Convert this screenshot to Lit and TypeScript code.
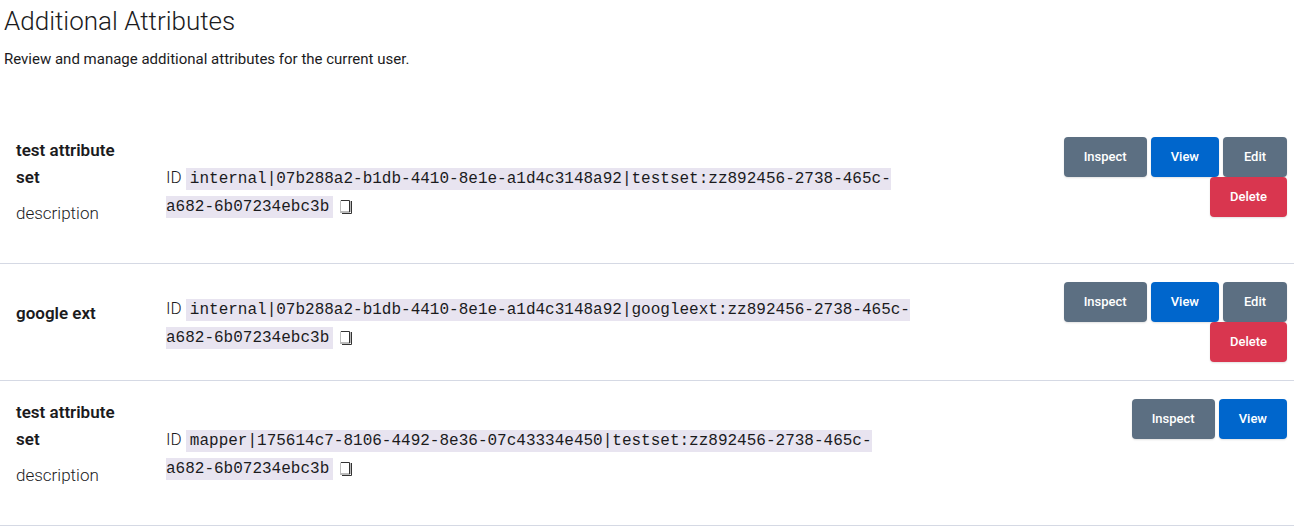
import { LitElement, html, css, nothing } from "lit";
import { customElement, property } from "lit/decorators.js";

type Action = "Inspect" | "View" | "Edit" | "Delete";

interface AttributeSet {
  name: string;
  description?: string;
  id: string;
  actions: Action[];
}

const SETS: AttributeSet[] = [
  {
    name: "test attribute set",
    description: "description",
    id: "internal|07b288a2-b1db-4410-8e1e-a1d4c3148a92|testset:zz892456-2738-465c-a682-6b07234ebc3b",
    actions: ["Inspect", "View", "Edit", "Delete"],
  },
  {
    name: "google ext",
    id: "internal|07b288a2-b1db-4410-8e1e-a1d4c3148a92|googleext:zz892456-2738-465c-a682-6b07234ebc3b",
    actions: ["Inspect", "View", "Edit", "Delete"],
  },
  {
    name: "test attribute set",
    description: "description",
    id: "mapper|175614c7-8106-4492-8e36-07c43334e450|testset:zz892456-2738-465c-a682-6b07234ebc3b",
    actions: ["Inspect", "View"],
  },
];

@customElement("copy-button")
export class CopyButton extends LitElement {
  @property() value = "";

  static styles = css`
    :host {
      display: inline-block;
      margin-left: 7px;
      vertical-align: -3px;
      line-height: 0;
    }
    .copy {
      padding: 0;
      border: 0;
      background: none;
      cursor: pointer;
    }
    .icon {
      display: block;
    }
  `;

  private copy() {
    navigator.clipboard?.writeText(this.value);
  }

  render() {
    return html`<button class="copy" type="button" aria-label="Copy ID" @click=${this.copy}>
      <svg class="icon" width="12" height="14" viewBox="0 0 12 14" fill="none">
        <path d="M0.5 0.5v11.5M10.5 1v11" stroke="#bbb" />
        <path d="M0 12h10" stroke="#bbb" stroke-width="2" />
        <path d="M1 0.5h8.5v11.5M11.5 1v12.5H2" stroke="#333" />
      </svg>
    </button>`;
  }
}

@customElement("app-root")
export class AppRoot extends LitElement {
  static styles = css`
    :host {
      display: block;
      background: #fff;
      color: #1b1b1d;
      font-family: Roboto, "Noto Sans", sans-serif;
      font-size: 17px;
      font-weight: 300;
      line-height: 28px;
    }
    .header {
      padding: 3px 4px 0;
    }
    .title {
      margin: 0;
      font-size: 26px;
      font-weight: 300;
      line-height: 36px;
    }
    .intro {
      margin: 8px 0 0;
      font-size: 15px;
      font-weight: 400;
      line-height: 24px;
    }
    .sets {
      width: 100%;
      margin-top: 48px;
      border-collapse: collapse;
      table-layout: fixed;
    }
    .cell {
      padding: 18px 16px;
      border-bottom: 1px solid #d5d9e4;
      text-align: left;
      vertical-align: middle;
      font-weight: 300;
    }
    .name {
      box-sizing: border-box;
      width: 150px;
    }
    .actions {
      box-sizing: border-box;
      width: 28%;
      padding-right: 7px;
      padding-left: 64px;
      text-align: right;
      vertical-align: top;
    }
    .set-name {
      margin: 0 0 9px;
      font-size: 17px;
      font-weight: 600;
      line-height: 27px;
    }
    .set-text {
      margin: 0 0 18px;
      line-height: 27px;
    }
    .id {
      padding: 2px 4px;
      background: #e8e4f0;
      font-family: "Liberation Mono", monospace;
      font-size: 16px;
      font-weight: 400;
      line-height: 16px;
    }
    .buttons {
      display: flex;
      flex-wrap: wrap;
      justify-content: flex-end;
      column-gap: 4px;
    }
    .button {
      min-width: 64px;
      height: 40px;
      padding: 0 20px;
      border: 0;
      border-radius: 4px;
      background: #5c6f82;
      box-shadow: 0 1px 2px rgb(0 0 0 / 12%);
      color: #fff;
      font: 500 13px/20px Roboto, "Noto Sans", sans-serif;
      cursor: pointer;
    }
    .button.view {
      background: #0066cc;
    }
    .button.delete {
      background: #d9364f;
    }
  `;

  private renderSet(set: AttributeSet) {
    return html`<tr>
      <th class="cell name" scope="row">
        <h2 class="set-name">${set.name}</h2>
        <p class="set-text">${set.description ?? nothing}</p>
      </th>
      <td class="cell">
        ID <code class="id">${set.id}</code><copy-button .value=${set.id}></copy-button>
      </td>
      <td class="cell actions">
        <div class="buttons">
          ${set.actions.map(
            (action) => html`<button class="button ${action.toLowerCase()}" type="button">${action}</button>`,
          )}
        </div>
      </td>
    </tr>`;
  }

  render() {
    return html`
      <header class="header">
        <h1 class="title">Additional Attributes</h1>
        <p class="intro">Review and manage additional attributes for the current user.</p>
      </header>
      <table class="sets">
        <tbody>
          ${SETS.map((set) => this.renderSet(set))}
        </tbody>
      </table>
    `;
  }
}
